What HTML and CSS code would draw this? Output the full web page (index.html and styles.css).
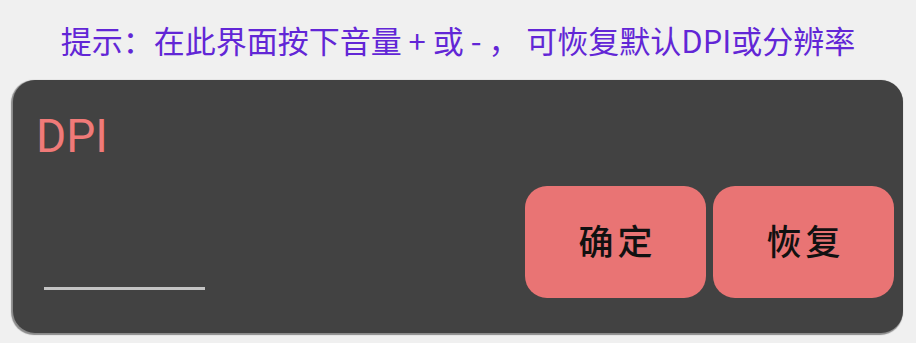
FILE: index.html
```html
<!DOCTYPE html>
<html lang="zh">
<head>
<meta charset="utf-8">
<link rel="stylesheet" href="styles.css">
</head>
<body>
<div class="page">
  <p class="hint">提示：在此界面按下音量 + 或 - ， 可恢复默认DPI或分辨率</p>
  <div class="card">
    <div class="label">DPI</div>
    <div class="row">
      <div class="field"><div class="line"></div></div>
      <div class="btn"><span class="btn-text">确定</span></div>
      <div class="btn"><span class="btn-text">恢复</span></div>
    </div>
  </div>
</div>
</body>
</html>
```
FILE: styles.css
```css
html, body {
  margin: 0;
  padding: 0;
  background: #f0f0f0;
}
.page {
  width: 916px;
  height: 343px;
  box-sizing: border-box;
  padding: 20px 13px 0 13px;
  display: flex;
  flex-direction: column;
  font-family: Roboto, "Noto Sans CJK SC", sans-serif;
}
.hint {
  margin: 0;
  height: 40px;
  line-height: 40px;
  text-align: center;
  font-size: 31px;
  color: #6226d6;
  font-family: "Noto Sans CJK SC", sans-serif;
  white-space: nowrap;
}
.card {
  margin-top: 20px;
  height: 253px;
  box-sizing: border-box;
  background: #424242;
  border-radius: 22px;
  box-shadow: -1px 1px 1px 1px #8a8a8a;
  display: flex;
  flex-direction: column;
  padding: 28px 9px 0 23px;
}
.label {
  font-family: Roboto, sans-serif;
  font-size: 46px;
  line-height: 56px;
  color: #f07a78;
}
.row {
  margin-top: 22px;
  display: flex;
  align-items: flex-start;
  gap: 7px;
}
.field {
  flex: 1;
  height: 112px;
  display: flex;
  align-items: flex-end;
}
.line {
  width: 161px;
  height: 3px;
  margin-left: 8px;
  margin-bottom: 8px;
  background: #c4c4c4;
}
.btn {
  width: 181px;
  height: 112px;
  border-radius: 22px;
  background: #e97474;
  display: flex;
  align-items: center;
  justify-content: center;
  font-family: "Noto Sans CJK SC", sans-serif;
  font-size: 35px;
  font-weight: 500;
  letter-spacing: 4px;
  color: #111;
}
.btn-text {
  margin-top: -6px;
  margin-left: 4px;
}
```
